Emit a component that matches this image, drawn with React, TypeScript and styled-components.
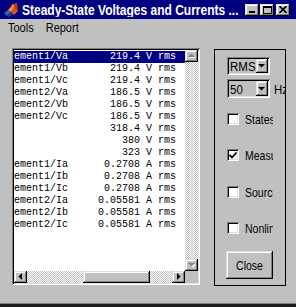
import React from 'react';
import styled, { createGlobalStyle, css } from 'styled-components';

const Global = createGlobalStyle`
  html, body { margin: 0; padding: 0; background: #c0c0c0; }
  body { width: 296px; height: 307px; overflow: hidden; }
  * { box-sizing: border-box; }
`;

const raised = css`
  box-shadow: inset -1px -1px #000, inset 1px 1px #dfdfdf, inset -2px -2px #808080, inset 2px 2px #fff;
`;
const sunken = css`
  box-shadow: inset 1px 1px #808080, inset -1px -1px #fff, inset 2px 2px #000, inset -2px -2px #dfdfdf;
`;
const checker = css`
  background-color: #fff;
  background-image: conic-gradient(#c0c0c0 25%, transparent 0 50%, #c0c0c0 0 75%, transparent 0);
  background-size: 2px 2px;
`;
const tall = (k: number) => css`
  display: inline-block;
  transform: scaleY(${k});
  transform-origin: 50% 55%;
`;

const Window = styled.div`
  width: 296px;
  height: 307px;
  background: #c0c0c0;
  display: flex;
  flex-direction: column;
  font-family: "Liberation Sans", Arial, sans-serif;
  box-shadow: inset 0 -3px #1c1c1c, inset 0 -4px #808080;
  overflow: hidden;
`;

const TitleBar = styled.div`
  height: 19px;
  flex: none;
  background: #000080;
  display: flex;
  align-items: center;
  padding: 0 6px 0 3px;
`;

const Title = styled.div`
  flex: 1;
  margin-left: 3px;
  color: #fff;
  font-weight: bold;
  font-size: 12px;
  white-space: nowrap;
  overflow: hidden;
`;

const TitleText = styled.span`
  ${tall(1.18)};
`;

const CapButtons = styled.div`
  display: flex;
  align-items: center;
`;

const CapButton = styled.div<{ $gap?: number }>`
  width: 14px;
  height: 12px;
  margin-left: ${p => p.$gap ?? 0}px;
  background: #c0c0c0;
  ${raised};
  display: flex;
  align-items: center;
  justify-content: center;
`;

const MenuBar = styled.div`
  height: 29px;
  flex: none;
  display: flex;
  gap: 12px;
  padding: 4px 0 0 8px;
  font-size: 11px;
  line-height: 13px;
  color: #000;
`;

const MenuItem = styled.span`
  ${tall(1.2)};
`;

const Body = styled.div`
  display: flex;
  align-items: flex-start;
  padding-left: 12px;
`;

const ListBox = styled.div`
  width: 188px;
  height: 237px;
  padding: 2px;
  ${sunken};
  background: #fff;
  display: grid;
  grid-template-columns: 171px 13px;
  grid-template-rows: 1fr 12px;
`;

const Rows = styled.div`
  overflow: hidden;
  padding-top: 1px;
  background: #fff;
`;

const Row = styled.div<{ $selected?: boolean }>`
  height: 12px;
  display: flex;
  justify-content: space-between;
  padding-right: 9px;
  font-family: "Liberation Mono", "Courier New", monospace;
  font-size: 10px;
  line-height: 12px;
  white-space: pre;
  background: ${p => (p.$selected ? '#000080' : 'transparent')};
  color: ${p => (p.$selected ? '#fff' : '#000')};
`;

const Cell = styled.span`
  ${tall(1.12)};
`;

const VScroll = styled.div`
  display: flex;
  flex-direction: column;
`;

const HScroll = styled.div`
  display: flex;
`;

const ArrowButton = styled.div<{ $w: number; $h: number }>`
  width: ${p => p.$w}px;
  height: ${p => p.$h}px;
  flex: none;
  background: #c0c0c0;
  ${raised};
  display: flex;
  align-items: center;
  justify-content: center;
`;

const Track = styled.div<{ $size?: number }>`
  ${checker};
  flex: ${p => (p.$size ? `0 0 ${p.$size}px` : '1')};
`;

const Thumb = styled.div<{ $size: number }>`
  flex: 0 0 ${p => p.$size}px;
  background: #c0c0c0;
  ${raised};
`;

const Corner = styled.div`
  background: #c0c0c0;
`;

const Panel = styled.div`
  width: 72px;
  height: 237px;
  margin: 1px 0 0 14px;
  border: 1px solid #000;
  padding-left: 12px;
  display: flex;
  flex-direction: column;
  overflow: hidden;
  font-size: 10.5px;
`;

const SelectRow = styled.div<{ $top: number }>`
  display: flex;
  align-items: center;
  margin-top: ${p => p.$top}px;
`;

const Select = styled.div<{ $h: number }>`
  width: 43px;
  height: ${p => p.$h}px;
  flex: none;
  ${sunken};
  background: #c0c0c0;
  display: flex;
  align-items: center;
  padding: 2px 2px 2px 3px;
  font-size: 11.5px;
`;

const SelectText = styled.span`
  flex: 1;
  span { ${tall(1.15)}; }
`;

const Unit = styled.span`
  margin-left: 4px;
  font-size: 11.5px;
  white-space: nowrap;
  ${tall(1.15)};
`;

const CheckRow = styled.div<{ $top: number }>`
  display: flex;
  align-items: center;
  height: 12px;
  margin-top: ${p => p.$top}px;
`;

const CheckBox = styled.div`
  width: 12px;
  height: 12px;
  flex: none;
  background: #fff;
  ${sunken};
  display: flex;
  align-items: center;
  justify-content: center;
`;

const CheckLabel = styled.span`
  margin-left: 6px;
  width: 28px;
  overflow: hidden;
  white-space: nowrap;
  line-height: 14px;
  ${tall(1.2)};
`;

const CloseButton = styled.div`
  width: 47px;
  height: 28px;
  margin: 17px 0 0 -1px;
  background: #c0c0c0;
  ${raised};
  display: flex;
  align-items: center;
  justify-content: center;
  font-size: 10.5px;
`;

const ButtonText = styled.span`
  ${tall(1.25)};
`;

type Dir = 'up' | 'down' | 'left' | 'right';

const Arrow: React.FC<{ dir: Dir; disabled?: boolean }> = ({ dir, disabled }) => {
  const vertical = dir === 'up' || dir === 'down';
  const w = vertical ? 7 : 5;
  const h = vertical ? 5 : 7;
  const p = vertical
    ? dir === 'up' ? '0,4 3.5,0.5 7,4' : '0,1 3.5,4.5 7,1'
    : dir === 'left' ? '4,0 0.5,3.5 4,7' : '1,0 4.5,3.5 1,7';
  return (
    <svg width={w + 1} height={h + 1} viewBox={`0 0 ${w + 1} ${h + 1}`}>
      {disabled && <polygon points={p} fill="#fff" transform="translate(1,1)" />}
      <polygon points={p} fill={disabled ? '#808080' : '#000'} />
    </svg>
  );
};

const Logo = () => (
  <svg width="16" height="16" viewBox="0 0 16 16">
    <polygon points="1,11 5,8 8,10 4,14" fill="#3a5fb0" />
    <polygon points="4,14 8,10 10,12 6,15" fill="#1f3b80" />
    <polygon points="5,8 10,2 12,6 8,10" fill="#f57f20" />
    <polygon points="10,2 14,1 15,9 12,6" fill="#c8321e" />
    <polygon points="8,10 12,6 15,9 11,13" fill="#e0501a" />
    <polygon points="9,4 10,2 11,4" fill="#ffd040" />
    <polygon points="6,8 8,6 9,7 7,9" fill="#ffb020" />
  </svg>
);

const rows: { name: string; value: string; selected?: boolean }[] = [
  { name: 'ement1/Va', value: '219.4 V rms', selected: true },
  { name: 'ement1/Vb', value: '219.4 V rms' },
  { name: 'ement1/Vc', value: '219.4 V rms' },
  { name: 'ement2/Va', value: '186.5 V rms' },
  { name: 'ement2/Vb', value: '186.5 V rms' },
  { name: 'ement2/Vc', value: '186.5 V rms' },
  { name: '', value: '318.4 V rms' },
  { name: '', value: '380 V rms' },
  { name: '', value: '323 V rms' },
  { name: 'ement1/Ia', value: '0.2708 A rms' },
  { name: 'ement1/Ib', value: '0.2708 A rms' },
  { name: 'ement1/Ic', value: '0.2708 A rms' },
  { name: 'ement2/Ia', value: '0.05581 A rms' },
  { name: 'ement2/Ib', value: '0.05581 A rms' },
  { name: 'ement2/Ic', value: '0.05581 A rms' },
];

const checks = [
  { label: 'States', checked: false, top: 15 },
  { label: 'Measurements', checked: true, top: 24 },
  { label: 'Sources', checked: false, top: 25 },
  { label: 'Nonlinear', checked: false, top: 24 },
];

export default function App() {
  return (
    <>
      <Global />
      <Window>
        <TitleBar>
          <Logo />
          <Title><TitleText>Steady-State Voltages and Currents ...</TitleText></Title>
          <CapButtons>
            <CapButton>
              <svg width="8" height="7" viewBox="0 0 8 7">
                <rect x="1" y="5" width="6" height="2" fill="#000" />
              </svg>
            </CapButton>
            <CapButton $gap={1}>
              <svg width="9" height="8" viewBox="0 0 9 8">
                <rect x="0.5" y="0.5" width="8" height="7" fill="none" stroke="#000" />
                <rect x="0" y="0" width="9" height="2" fill="#000" />
              </svg>
            </CapButton>
            <CapButton $gap={2}>
              <svg width="8" height="7" viewBox="0 0 8 7">
                <path d="M0.5 0 L7.5 7 M7.5 0 L0.5 7" stroke="#000" strokeWidth="1.6" />
              </svg>
            </CapButton>
          </CapButtons>
        </TitleBar>
        <MenuBar>
          <MenuItem>Tools</MenuItem>
          <MenuItem>Report</MenuItem>
        </MenuBar>
        <Body>
          <ListBox>
            <Rows>
              {rows.map((r, i) => (
                <Row key={i} $selected={r.selected}>
                  <Cell>{r.name}</Cell>
                  <Cell>{r.value}</Cell>
                </Row>
              ))}
            </Rows>
            <VScroll>
              <ArrowButton $w={13} $h={12}><Arrow dir="up" disabled /></ArrowButton>
              <Track />
              <ArrowButton $w={13} $h={12}><Arrow dir="down" disabled /></ArrowButton>
            </VScroll>
            <HScroll>
              <ArrowButton $w={13} $h={12}><Arrow dir="left" /></ArrowButton>
              <Track $size={56} />
              <Thumb $size={67} />
              <Track />
              <ArrowButton $w={13} $h={12}><Arrow dir="right" /></ArrowButton>
            </HScroll>
            <Corner />
          </ListBox>
          <Panel>
            <SelectRow $top={7}>
              <Select $h={18}>
                <SelectText><span>RMS</span></SelectText>
                <ArrowButton $w={12} $h={14}><Arrow dir="down" /></ArrowButton>
              </Select>
            </SelectRow>
            <SelectRow $top={4}>
              <Select $h={19}>
                <SelectText><span>50</span></SelectText>
                <ArrowButton $w={12} $h={15}><Arrow dir="down" /></ArrowButton>
              </Select>
              <Unit>Hz</Unit>
            </SelectRow>
            {checks.map(c => (
              <CheckRow key={c.label} $top={c.top}>
                <CheckBox>
                  {c.checked && (
                    <svg width="8" height="7" viewBox="0 0 8 7">
                      <path d="M0.5 3 L3 5.5 L7.5 0.5" fill="none" stroke="#000" strokeWidth="1.8" />
                    </svg>
                  )}
                </CheckBox>
                <CheckLabel>{c.label}</CheckLabel>
              </CheckRow>
            ))}
            <CloseButton><ButtonText>Close</ButtonText></CloseButton>
          </Panel>
        </Body>
      </Window>
    </>
  );
}
